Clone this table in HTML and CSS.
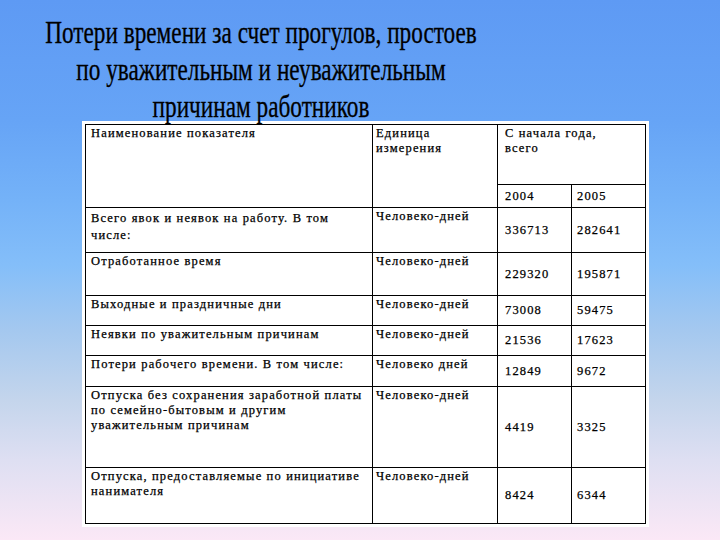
FILE: index.html
```html
<!DOCTYPE html>
<html lang="ru">
<head>
<meta charset="utf-8">
<link rel="stylesheet" href="styles.css">
</head>
<body>
<div class="slide">
  <h1 class="title">
    <span class="line">Потери времени за счет прогулов, простоев</span>
    <span class="line">по уважительным и неуважительным</span>
    <span class="line">причинам работников</span>
  </h1>
  <div class="sheet">
    <table class="grid">
      <colgroup>
        <col class="c1"><col class="c2"><col class="c3"><col class="c4">
      </colgroup>
      <tr class="h1">
        <td rowspan="2">Наименование показателя</td>
        <td rowspan="2" class="unit">Единица<br>измерения</td>
        <td colspan="2" class="yr">С начала года,<br>всего</td>
      </tr>
      <tr class="h2">
        <td class="num yr">2004</td>
        <td class="num">2005</td>
      </tr>
      <tr class="r1">
        <td class="tall">Всего явок и неявок на работу. В том<br>числе:</td>
        <td class="unit">Человеко-дней</td>
        <td class="num yr">336713</td>
        <td class="num">282641</td>
      </tr>
      <tr class="r2">
        <td>Отработанное время</td>
        <td class="unit">Человеко-дней</td>
        <td class="num yr">229320</td>
        <td class="num">195871</td>
      </tr>
      <tr class="r3">
        <td>Выходные и праздничные дни</td>
        <td class="unit">Человеко-дней</td>
        <td class="num yr">73008</td>
        <td class="num">59475</td>
      </tr>
      <tr class="r4">
        <td>Неявки по уважительным причинам</td>
        <td class="unit">Человеко-дней</td>
        <td class="num yr">21536</td>
        <td class="num">17623</td>
      </tr>
      <tr class="r5">
        <td>Потери рабочего времени. В том числе:</td>
        <td class="unit">Человеко дней</td>
        <td class="num yr">12849</td>
        <td class="num">9672</td>
      </tr>
      <tr class="r6">
        <td>Отпуска без сохранения заработной платы<br>по семейно-бытовым и другим<br>уважительным причинам</td>
        <td class="unit">Человеко-дней</td>
        <td class="num yr">4419</td>
        <td class="num">3325</td>
      </tr>
      <tr class="r7">
        <td>Отпуска, предоставляемые по инициативе<br>нанимателя</td>
        <td class="unit">Человеко-дней</td>
        <td class="num yr">8424</td>
        <td class="num">6344</td>
      </tr>
    </table>
  </div>
</div>
</body>
</html>
```
FILE: styles.css
```css
html, body {
  margin: 0;
  padding: 0;
}
body {
  width: 720px;
  height: 540px;
  overflow: hidden;
  background: linear-gradient(to bottom,
    #5e9af4 0px,
    #66a4f6 120px,
    #74b2f8 200px,
    #84bef9 265px,
    #a4c8ef 330px,
    #c4d5ec 400px,
    #dedff2 460px,
    #fbe8f6 540px);
}
.slide {
  width: 720px;
  height: 540px;
}
.title {
  margin: 0;
  width: 522px;
  height: 121px;
  box-sizing: border-box;
  padding-top: 14px;
  display: flex;
  flex-direction: column;
  align-items: center;
  font-family: "Liberation Serif", "Times New Roman", serif;
  font-weight: normal;
  font-size: 31px;
  line-height: 37px;
  color: #000;
  -webkit-text-stroke: 0.3px #000;
  white-space: nowrap;
  transform: scaleX(0.75);
  position: relative;
  z-index: 1;
}
.line {
  display: block;
}
.sheet {
  margin-left: 82px;
  width: 561px;
  padding: 3px;
  background: #fff;
}
.grid {
  border-collapse: collapse;
  table-layout: fixed;
  width: 561px;
  font-family: "Liberation Serif", "Times New Roman", serif;
  font-size: 12.5px;
  line-height: 15px;
  letter-spacing: 1.15px;
  color: #000;
  -webkit-text-stroke: 0.25px #000;
}
.c1 { width: 287px; }
.c2 { width: 125px; }
.c3 { width: 74px; }
.c4 { width: 74px; }
.grid td {
  border: 1px solid #000;
  padding: 1px 2px 0 5px;
  vertical-align: top;
  white-space: nowrap;
  overflow: hidden;
}
.grid td.tall {
  line-height: 17px;
  padding-top: 2px;
}
.grid td.unit {
  padding-left: 3px;
}
.grid td.yr {
  padding-left: 7px;
}
.grid td.num {
  vertical-align: middle;
  padding-top: 0;
}
.h1 { height: 60px; }
.h2 { height: 23px; }
.r1 { height: 45px; }
.r2 { height: 43px; }
.r3 { height: 30px; }
.r4 { height: 30px; }
.r5 { height: 31px; }
.r6 { height: 81px; }
.r7 { height: 56px; }
```
